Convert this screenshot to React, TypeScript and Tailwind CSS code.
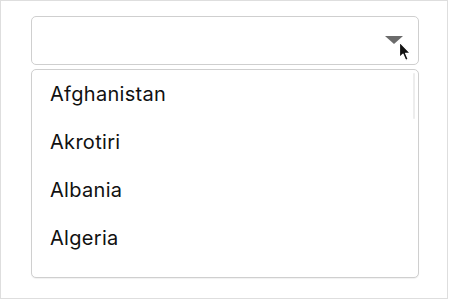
import React from 'react';

const countries = ['Afghanistan', 'Akrotiri', 'Albania', 'Algeria'];

export default function App() {
  return (
    <div className="w-[450px] h-[300px] bg-white">
      <div className="w-[448px] h-[299px] border border-[#dedede] bg-white pt-[15px] pl-[30px]">
        {/* select box */}
        <div className="relative w-[388px] h-[49px] rounded-[5px] border border-[#cfcfcf] bg-white">
          <svg className="absolute left-[353px] top-[19px]" width="18" height="8" viewBox="0 0 18 8">
            <path d="M0 0 L18 0 L9 8 Z" fill="#6b6b6b" />
          </svg>
          {/* mouse pointer */}
          <svg className="absolute left-[366px] top-[24px]" width="14" height="21" viewBox="0 0 14 21">
            <path
              d="M1.5 1 L1.5 16.5 L5 13.2 L7.7 19.4 L10.2 18.3 L7.6 12.3 L12.4 12.3 Z"
              fill="#111"
              stroke="#fff"
              strokeWidth="1.2"
              strokeLinejoin="round"
            />
          </svg>
        </div>

        {/* dropdown list */}
        <div className="relative mt-[4px] w-[388px] h-[209px] rounded-[5px] border border-[#cfcfcf] bg-white shadow-[0_1px_1px_rgba(0,0,0,0.06)]">
          <div className="absolute right-[3px] top-[3px] w-[2px] h-[46px] rounded-full bg-[#ededed]" />
          {countries.map((c) => (
            <div
              key={c}
              className="h-[48px] flex items-center pl-[18px] text-[20px] tracking-[0.3px] text-[#111] font-['Inter','Liberation_Sans',sans-serif]"
            >
              {c}
            </div>
          ))}
        </div>
      </div>
    </div>
  );
}
